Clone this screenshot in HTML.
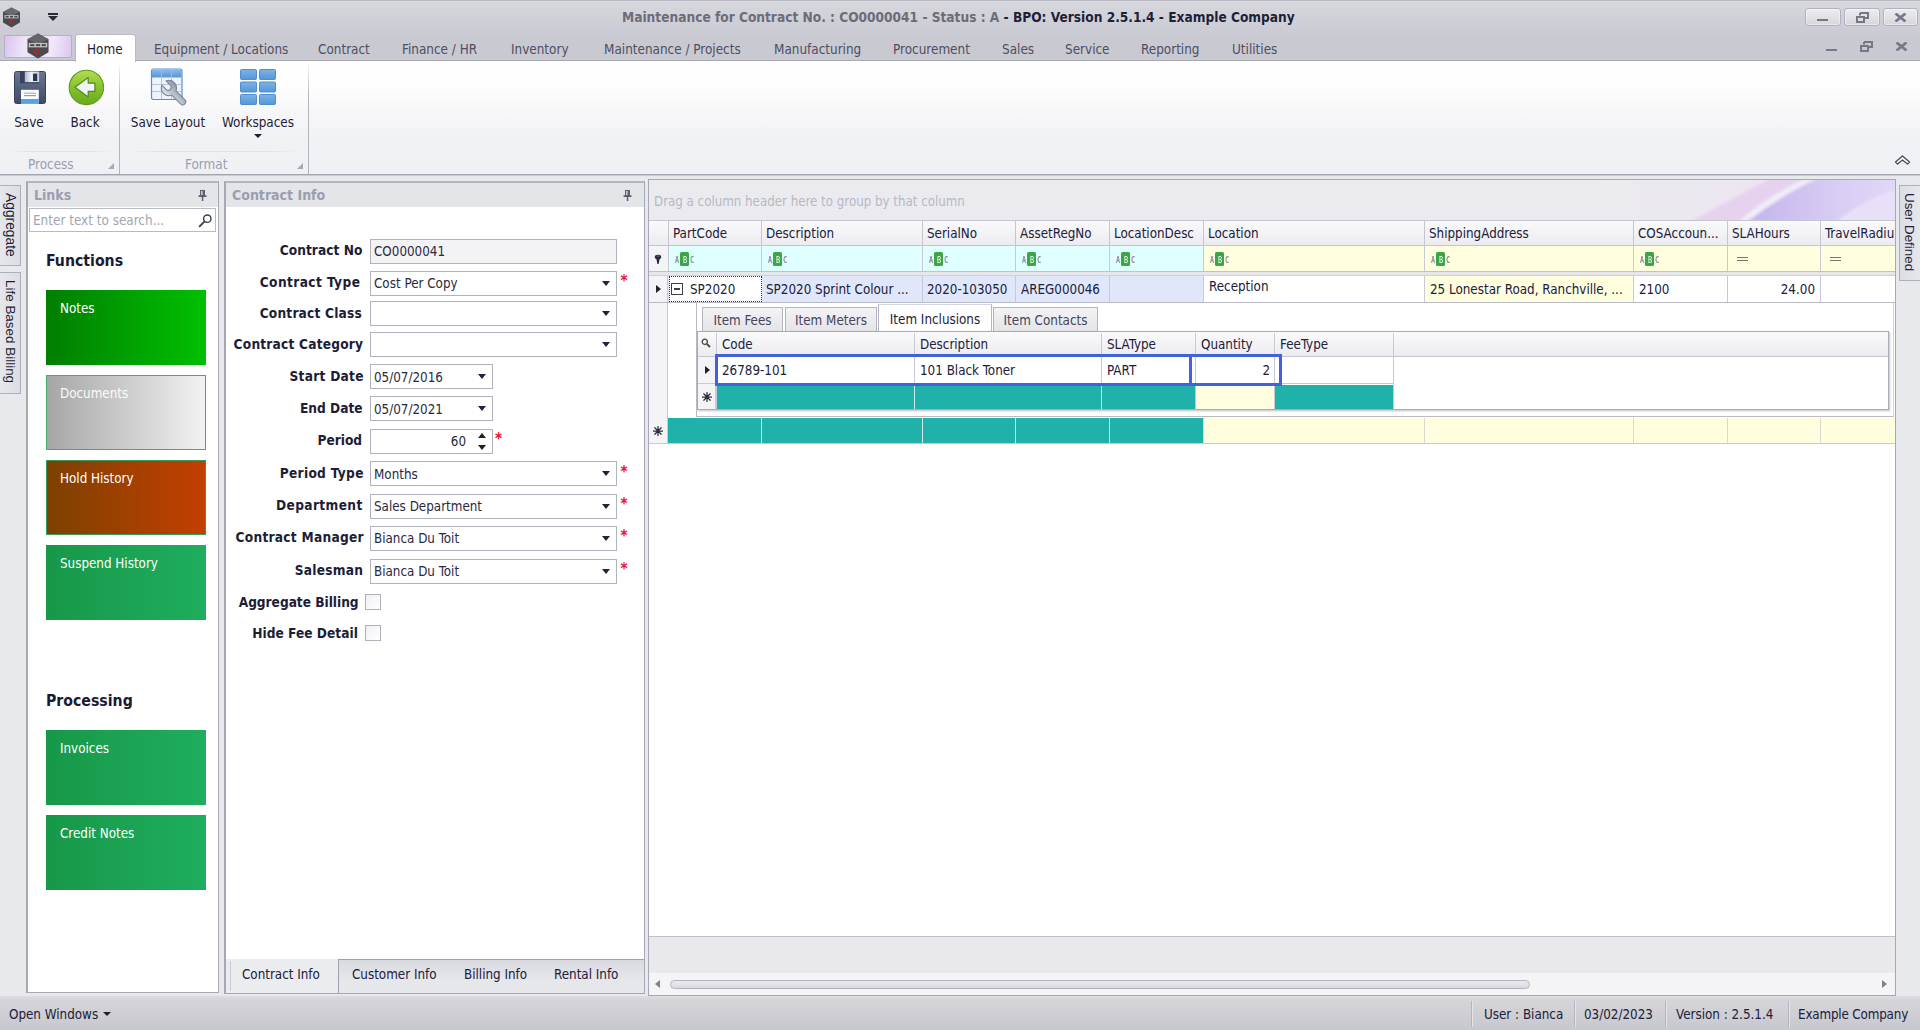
<!DOCTYPE html>
<html><head><meta charset="utf-8"><title>Maintenance for Contract</title>
<style>
*{box-sizing:border-box;margin:0;padding:0}
html,body{width:1920px;height:1030px;overflow:hidden;background:#e8e9ed}
body{font-family:"DejaVu Sans Condensed","Liberation Sans",sans-serif;font-size:13.3px;color:#20203a;position:relative;line-height:16px}
.a{position:absolute;white-space:nowrap}
.b{font-weight:bold;font-size:13.6px}
/* title */
#title{left:0;top:0;width:1920px;height:35px;background:linear-gradient(#d7d8dd,#c9cad3);border-top:1px solid #b9bac3}
#tabs{left:0;top:35px;width:1920px;height:26px;background:#c9c9d1;border-bottom:1px solid #a9a9b3}
#ribbon{left:0;top:61px;width:1920px;height:114px;background:linear-gradient(#ffffff 0%,#fefefe 20%,#f7f7f9 45%,#f1f2f5 70%,#eff0f4 100%);border-bottom:1px solid #a2a4b0;box-shadow:0 1px 0 #c9cad3}
.tab{top:42px;color:#4e4e64;font-size:13.4px}
.wb{top:8px;width:35px;height:18px;border:1px solid #b1b2bd;border-radius:3px;background:linear-gradient(#ececf0,#d6d6dc);box-shadow:inset 0 0 0 1px rgba(255,255,255,.45)}
.rl{top:115px;text-align:center;font-size:13.4px;color:#1d1d35}
.gc{top:157px;color:#9a9eb0;font-size:13.4px}
.vsep{width:1px;background:linear-gradient(rgba(170,170,182,0),#b4b4be 30%,#b4b4be)}
/* panels */
.panel{background:#fff;border:1px solid #a6a8b4}
.phead{left:0;top:0;height:24px;background:#e4e5e9;color:#9b9eb0;font-weight:bold;font-size:14px;padding:4px 0 0 6px}
.tile{left:46px;width:160px;height:75px;color:#fff;font-size:13.3px;padding:11px 0 0 14px}
.lbl{font-weight:bold;font-size:13.6px;color:#1d1d35;text-align:right;left:0;width:139px}
.inp{left:145px;height:25px;border:1px solid #b0b2bd;background:#fff;padding:4px 0 0 3px;font-size:13.3px;color:#2a2a40}
.dd:after{content:"";position:absolute;right:6px;top:9px;border:4.5px solid transparent;border-top:5px solid #222238;border-bottom:0}
.vt{writing-mode:vertical-rl;font-family:"Liberation Sans",sans-serif;font-size:13.8px;color:#1d1d35;line-height:16px}
.chk{width:16px;height:16px;border:1px solid #aeb0bb;background:linear-gradient(135deg,#f0f0f4,#fff)}
.abc{width:20px;height:14px}.abc:before{content:"";position:absolute;left:5px;top:0;width:9px;height:14px;background:#3aa648;border-radius:1.5px}.abc i,.abc b{position:absolute;left:0;top:3px;font:bold 9.5px/10px "DejaVu Sans Mono","Liberation Mono",monospace;color:#8a8c9c;transform:scaleX(.72);transform-origin:0 0}.abc b{left:7.6px;color:#fff;font-weight:normal}
.star{font-size:10px;color:#333;line-height:12px;font-family:"DejaVu Sans",sans-serif}
.req{color:#f0102c;font-weight:bold;font-size:15px}
</style></head><body>
<div class="a" id="title"></div>
<div class="a" id="tabs"></div>
<div class="a" id="ribbon"></div>
<!-- title bar -->
<svg class="a" style="left:2px;top:7px" width="19" height="21" viewBox="0 0 19 21"><polygon points="9.5,0.5 18,5 18,15.5 9.5,20.5 1,15.5 1,5" fill="#4a4a4e"/><polygon points="9.5,0.5 18,5 9.5,9 1,5" fill="#6a6a6e"/><rect x="2.5" y="8" width="14" height="3.4" fill="#b9b9bb"/><rect x="3.6" y="8.9" width="3" height="1.6" fill="#4a4a4e"/><rect x="8" y="8.9" width="3" height="1.6" fill="#4a4a4e"/><rect x="12.4" y="8.9" width="3" height="1.6" fill="#4a4a4e"/><circle cx="9" cy="15" r="1.6" fill="none" stroke="#c8202a" stroke-width="0.9"/></svg>
<div class="a" style="left:48px;top:13px;width:10px;height:2px;background:#2a2a3a"></div>
<div class="a" style="left:48px;top:16px;border:5px solid transparent;border-top:5px solid #2a2a3a;border-bottom:0"></div>
<div class="a b" style="left:622px;top:9px;font-size:13.6px;color:#6c6c78">Maintenance for Contract No. : CO0000041 - Status : A <span style="color:#1f1f36">- BPO: Version 2.5.1.4 - Example Company</span></div>
<div class="a wb" style="left:1805px;width:36px"><div class="a" style="left:11px;top:10px;width:11px;height:2px;background:#767888"></div></div>
<div class="a wb" style="left:1844px;width:36px"><svg class="a" style="left:11px;top:3px" width="13" height="11" viewBox="0 0 13 11"><path d="M4 1h8v5h-3M4 1v2.5" fill="none" stroke="#767888" stroke-width="2"/><rect x="1" y="5" width="7" height="5" fill="none" stroke="#767888" stroke-width="2"/></svg></div>
<div class="a wb" style="left:1883px"><svg class="a" style="left:10px;top:4px" width="13" height="9" viewBox="0 0 13 9"><path d="M1.5 0.5L11.5 8.5M11.5 0.5L1.5 8.5" stroke="#767888" stroke-width="2.7"/></svg></div>
<!-- tab row -->
<div class="a" style="left:4px;top:35px;width:68px;height:23px;border:1px solid #b4b0c6;border-radius:2px;background:linear-gradient(100deg,#d9c4ee 0%,#efe4f8 30%,#e8daf4 50%,#f1e8f9 70%,#dcc6ef 100%)"></div>
<svg class="a" style="left:26px;top:33px" width="24" height="26" viewBox="0 0 19 21"><polygon points="9.5,0.5 18,5 18,15.5 9.5,20.5 1,15.5 1,5" fill="#4a4a4e"/><polygon points="9.5,0.5 18,5 9.5,9 1,5" fill="#66666a"/><rect x="2" y="8" width="15" height="3.6" fill="#c4c4c6"/><rect x="3.2" y="9" width="3.4" height="1.6" fill="#4a4a4e"/><rect x="7.8" y="9" width="3.4" height="1.6" fill="#4a4a4e"/><rect x="12.4" y="9" width="3.4" height="1.6" fill="#4a4a4e"/><circle cx="8.5" cy="15" r="1.7" fill="none" stroke="#c8202a" stroke-width="0.9"/></svg>
<div class="a" style="left:75px;top:34px;width:61px;height:28px;background:#fff;border:1px solid #b9b9c3;border-bottom:0;border-radius:3px 3px 0 0"></div>
<div class="a tab" style="left:87px;color:#1d1d35">Home</div>
<div class="a tab" style="left:154px">Equipment / Locations</div>
<div class="a tab" style="left:318px">Contract</div>
<div class="a tab" style="left:402px">Finance / HR</div>
<div class="a tab" style="left:511px">Inventory</div>
<div class="a tab" style="left:604px">Maintenance / Projects</div>
<div class="a tab" style="left:774px">Manufacturing</div>
<div class="a tab" style="left:893px">Procurement</div>
<div class="a tab" style="left:1002px">Sales</div>
<div class="a tab" style="left:1065px">Service</div>
<div class="a tab" style="left:1141px">Reporting</div>
<div class="a tab" style="left:1232px">Utilities</div>
<div class="a" style="left:1826px;top:49px;width:11px;height:2px;background:#767888"></div>
<svg class="a" style="left:1860px;top:41px" width="13" height="11" viewBox="0 0 13 11"><path d="M4 1h8v5h-3M4 1v2.5" fill="none" stroke="#767888" stroke-width="2"/><rect x="1" y="5" width="7" height="5" fill="none" stroke="#767888" stroke-width="2"/></svg>
<svg class="a" style="left:1895px;top:42px" width="13" height="9" viewBox="0 0 13 9"><path d="M1.5 0.5L11.5 8.5M11.5 0.5L1.5 8.5" stroke="#767888" stroke-width="2.7"/></svg>

<!-- ribbon -->
<svg class="a" style="left:13px;top:70px" width="34" height="35" viewBox="0 0 34 35">
<defs><linearGradient id="sv1" x1="0" y1="0" x2="0" y2="1"><stop offset="0" stop-color="#6c7892"/><stop offset="1" stop-color="#3e4966"/></linearGradient>
<linearGradient id="sv2" x1="0" y1="0" x2="1" y2="0"><stop offset="0" stop-color="#aeb8cc"/><stop offset="0.45" stop-color="#eef2f8"/><stop offset="1" stop-color="#c6cedc"/></linearGradient></defs>
<rect x="1.5" y="1.5" width="31" height="32" rx="2" fill="url(#sv1)" stroke="#38425e" stroke-width="1"/>
<rect x="7" y="1.5" width="19.2" height="11.8" fill="#39435f"/>
<rect x="11.8" y="1.5" width="14.4" height="10.6" fill="url(#sv2)"/><rect x="20" y="3.6" width="4.2" height="7.4" fill="#2a3450"/>
<rect x="8" y="19.8" width="17.8" height="13.7" fill="#fbfcfe"/><rect x="11" y="22.6" width="12" height="1.2" fill="#a4aecb"/><rect x="11" y="25" width="12" height="1.2" fill="#8f9bc0"/><rect x="8" y="29" width="17.8" height="4" fill="#5aa2e0"/>
</svg>
<svg class="a" style="left:68px;top:69px" width="37" height="37" viewBox="0 0 37 37">
<defs><linearGradient id="bk1" x1="0" y1="0" x2="0" y2="1"><stop offset="0" stop-color="#b4dc54"/><stop offset="0.5" stop-color="#86c22c"/><stop offset="1" stop-color="#6aa81c"/></linearGradient></defs>
<circle cx="18.4" cy="18.4" r="17.2" fill="url(#bk1)" stroke="#5f9a1a" stroke-width="1.1"/>
<path d="M7 18.3L20.2 8.6V14.2H26.9V22.4H20.2V28z" fill="#eef4fa" stroke="#4f8c14" stroke-width="1.2" stroke-linejoin="round"/>
</svg>
<svg class="a" style="left:150px;top:68px" width="40" height="40" viewBox="0 0 40 40">
<defs><linearGradient id="sl1" x1="0" y1="0" x2="0" y2="1"><stop offset="0" stop-color="#8bbbe8"/><stop offset="1" stop-color="#5a96d6"/></linearGradient>
<linearGradient id="sl2" x1="0" y1="0" x2="1" y2="0"><stop offset="0" stop-color="#dfe4ec"/><stop offset="0.5" stop-color="#b4bdca"/><stop offset="1" stop-color="#8c97aa"/></linearGradient></defs>
<rect x="1.5" y="1" width="30.5" height="30.5" rx="2" fill="#eef2fa" stroke="#5f8dd0" stroke-width="1.2"/>
<path d="M2 3a1.5 1.5 0 0 1 1.5-1.500000000000000h26.5a1.5 1.5 0 0 1 1.5 1.5v6h-29.5z" fill="url(#sl1)"/>
<path d="M11.5 2v29M21.5 2v29" stroke="#a9bde0" stroke-width="1" fill="none" opacity=".8"/><path d="M2 9.5h29.5M2 16.5h29.5M2 23.5h29.5" stroke="#b4c4e4" stroke-width="1" fill="none"/>
<g transform="translate(18.9,20) rotate(-45)"><path d="M-2.9 -7.02L-2.9 -1A2.9 2.9 0 0 0 2.9 -1L2.9 -7.02A7.6 7.6 0 0 1 3.0 6.98L3.0 19.5A3.0 3.0 0 0 1 -3.0 19.5L-3.0 6.98A7.6 7.6 0 0 1 -2.9 -7.02Z" fill="url(#sl2)" stroke="#76829a" stroke-width="1"/></g>
</svg>
<svg class="a" style="left:239px;top:68px" width="38" height="38" viewBox="0 0 38 38">
<defs><linearGradient id="ws1" x1="0" y1="0" x2="0" y2="1"><stop offset="0" stop-color="#7db3e6"/><stop offset="1" stop-color="#5596d6"/></linearGradient></defs>
<g fill="url(#ws1)" stroke="#4f8ed0" stroke-width="1"><rect x="1.5" y="1.5" width="16" height="10" rx="1"/><rect x="20.5" y="1.5" width="16" height="10" rx="1"/><rect x="1.5" y="14" width="16" height="10" rx="1"/><rect x="20.5" y="14" width="16" height="10" rx="1"/><rect x="1.5" y="26.5" width="16" height="10" rx="1"/><rect x="20.5" y="26.5" width="16" height="10" rx="1"/></g>
</svg>
<div class="a rl" style="left:0;width:58px">Save</div>
<div class="a rl" style="left:56px;width:58px">Back</div>
<div class="a rl" style="left:118px;width:100px">Save Layout</div>
<div class="a rl" style="left:208px;width:100px">Workspaces</div>
<div class="a" style="left:254px;top:134px;border:4px solid transparent;border-top:4px solid #1d1d30;border-bottom:0"></div>
<div class="a vsep" style="left:119px;top:62px;height:112px"></div>
<div class="a vsep" style="left:308px;top:62px;height:112px"></div>
<div class="a" style="left:8px;top:151px;width:104px;height:1px;background:linear-gradient(90deg,rgba(220,220,228,0),#e0e0e6 20%,#e0e0e6 80%,rgba(220,220,228,0))"></div>
<div class="a" style="left:130px;top:151px;width:170px;height:1px;background:linear-gradient(90deg,rgba(220,220,228,0),#e0e0e6 20%,#e0e0e6 80%,rgba(220,220,228,0))"></div>
<div class="a gc" style="left:28px">Process</div>
<div class="a gc" style="left:185px">Format</div>
<div class="a" style="left:108px;top:163px;border:3px solid transparent;border-right-color:#a8a8b2;border-bottom-color:#a8a8b2"></div>
<div class="a" style="left:297px;top:163px;border:3px solid transparent;border-right-color:#a8a8b2;border-bottom-color:#a8a8b2"></div>
<svg class="a" style="left:1894px;top:154px" width="17" height="13" viewBox="0 0 17 13"><path d="M1.5 8L8.5 2L15.5 8L13.5 10L8.5 6L3.5 10z" fill="#fff" stroke="#4a4a56" stroke-width="1.3" stroke-linejoin="round"/></svg>

<!-- status bar -->
<div class="a" style="left:0;top:996px;width:1920px;height:34px;background:linear-gradient(#dcdce1,#d5d5da 10%,#c7c7ce)"></div>
<div class="a" style="left:9px;top:1007px">Open Windows</div><div class="a" style="left:103px;top:1012px;border:4px solid transparent;border-top:4px solid #222;border-bottom:0"></div>
<div class="a" style="left:1471px;top:1001px;width:2px;height:26px;border-left:1px solid #b4b4be;border-right:1px solid #e4e4e9"></div>
<div class="a" style="left:1574px;top:1001px;width:2px;height:26px;border-left:1px solid #b4b4be;border-right:1px solid #e4e4e9"></div>
<div class="a" style="left:1665px;top:1001px;width:2px;height:26px;border-left:1px solid #b4b4be;border-right:1px solid #e4e4e9"></div>
<div class="a" style="left:1788px;top:1001px;width:2px;height:26px;border-left:1px solid #b4b4be;border-right:1px solid #e4e4e9"></div>
<div class="a" style="left:1484px;top:1007px;letter-spacing:0px">User : Bianca</div>
<div class="a" style="left:1584px;top:1007px;letter-spacing:0px">03/02/2023</div>
<div class="a" style="left:1676px;top:1007px;letter-spacing:0px">Version : 2.5.1.4</div>
<div class="a" style="left:1798px;top:1007px;letter-spacing:-0.17px">Example Company</div>

<!-- left side tabs -->
<div class="a" style="left:0;top:185px;width:21px;height:81px;border:1px solid #adafba;border-left:0;background:linear-gradient(90deg,#e6e7eb,#dddee4)"></div>
<div class="a" style="left:0;top:272px;width:21px;height:122px;border:1px solid #adafba;border-left:0;background:linear-gradient(90deg,#e6e7eb,#dddee4)"></div>
<div class="a vt" style="left:2px;top:193px">Aggregate</div>
<div class="a vt" style="left:2px;top:280px;font-size:13.45px">Life Based Billing</div>
<!-- links panel -->
<div class="a panel" style="left:26px;top:181px;width:193px;height:812px;border-width:2px 1px 1px 2px;border-top-color:#b3b5c0">
 <div class="a phead" style="width:190px">Links</div>
 <svg class="a" style="left:170px;top:7px" width="9" height="11" viewBox="0 0 9 11"><path d="M2 0h5v5.2h-5z M0.500000000000000 5.2h8v1.8h-8z M3.8 7h1.500000000000000v4h-1.5z" fill="#5e6070"/><rect x="3" y="1" width="1.6" height="4" fill="#c9cad3"/></svg>
 <div class="a" style="left:1px;top:25px;width:187px;height:24px;border:1px solid #b8bac4;background:#fff;color:#a2a4b2;padding:4px 0 0 3px;font-size:13.4px">Enter text to search...</div>
 <svg class="a" style="left:170px;top:30px" width="15" height="15" viewBox="0 0 15 15"><circle cx="9.3" cy="5.7" r="3.7" fill="none" stroke="#3c3c48" stroke-width="1.4"/><path d="M6.6 8.4L1.6 13.4" stroke="#3c3c48" stroke-width="1.8" stroke-linecap="round"/></svg>
</div>
<div class="a" style="left:46px;top:251px;font-weight:bold;font-size:15.7px;color:#1a1a30;line-height:20px">Functions</div>
<div class="a tile" style="top:290px;background:linear-gradient(90deg,#007e00,#00c000)">Notes</div>
<div class="a tile" style="top:375px;background:linear-gradient(90deg,#a6a6a6,#f2f2f2);border:1px solid #3eae6c;padding:10px 0 0 13px;color:#fafafa">Documents</div>
<div class="a tile" style="top:460px;background:linear-gradient(90deg,#7c4100,#c43f00);border:1px solid #3a9a5c;padding:10px 0 0 13px">Hold History</div>
<div class="a tile" style="top:545px;background:linear-gradient(90deg,#179848,#1eae5e)">Suspend History</div>
<div class="a" style="left:46px;top:691px;font-weight:bold;font-size:15.7px;color:#1a1a30;line-height:20px">Processing</div>
<div class="a tile" style="top:730px;background:linear-gradient(90deg,#179848,#1eae5e)">Invoices</div>
<div class="a tile" style="top:815px;background:linear-gradient(90deg,#179848,#1eae5e)">Credit Notes</div>

<!-- contract info panel -->
<div class="a panel" style="left:224px;top:181px;width:421px;height:813px;border-width:2px 1px 1px 2px;border-top-color:#b3b5c0">
 <div class="a phead" style="width:418px">Contract Info</div>
 <svg class="a" style="left:397px;top:7px" width="9" height="11" viewBox="0 0 9 11"><path d="M2 0h5v5.2h-5z M0.500000000000000 5.2h8v1.8h-8z M3.8 7h1.500000000000000v4h-1.5z" fill="#5e6070"/><rect x="3" y="1" width="1.6" height="4" fill="#c9cad3"/></svg>
 <div class="a" style="left:0;top:776px;width:418px;height:34px;background:#ebecf0"></div>
 <div class="a" style="left:112px;top:776px;width:306px;height:34px;background:linear-gradient(#d9dae0,#e6e7eb 60%);border-top:1px solid #a0a2af;border-left:1px solid #a0a2af"></div><div class="a" style="left:4px;top:778px;width:1px;height:30px;background:#c9cad3"></div>
 <div class="a" style="left:16px;top:784px">Contract Info</div><div class="a" style="left:126px;top:784px">Customer Info</div><div class="a" style="left:238px;top:784px">Billing Info</div><div class="a" style="left:328px;top:784px">Rental Info</div>
</div>
<div class="a lbl" style="left:279.7px;top:242px;width:auto;text-align:left;letter-spacing:0.06px">Contract No</div>
<div class="a inp" style="left:370px;top:239px;width:247px;background:#f3f3f6">CO0000041</div>
<div class="a lbl" style="left:259.7px;top:274px;width:auto;text-align:left;letter-spacing:0.41px">Contract Type</div>
<div class="a inp dd" style="left:370px;top:271px;width:247px">Cost Per Copy</div>
<div class="a req" style="left:620.5px;top:273px">*</div>
<div class="a lbl" style="left:259.7px;top:305px;width:auto;text-align:left;letter-spacing:0.19px">Contract Class</div>
<div class="a inp dd" style="left:370px;top:301px;padding-top:5px;width:247px"></div>
<div class="a lbl" style="left:233.6px;top:336px;width:auto;text-align:left;letter-spacing:0.21px">Contract Category</div>
<div class="a inp dd" style="left:370px;top:332px;padding-top:5px;width:247px"></div>
<div class="a lbl" style="left:289.5px;top:368px;width:auto;text-align:left;letter-spacing:0.27px">Start Date</div>
<div class="a inp dd" style="left:370px;top:364px;padding-top:5px;width:123px">05/07/2016</div>
<div class="a lbl" style="left:300.0px;top:400px;width:auto;text-align:left;letter-spacing:-0.01px">End Date</div>
<div class="a inp dd" style="left:370px;top:396px;padding-top:5px;width:123px">05/07/2021</div>
<div class="a lbl" style="left:317.5px;top:432px;width:auto;text-align:left;letter-spacing:-0.01px">Period</div>
<div class="a inp" style="left:370px;top:429px;width:123px;text-align:right;padding-right:26px">60</div>
<div class="a" style="left:478px;top:433px;border:4px solid transparent;border-bottom:5px solid #222;border-top:0"></div>
<div class="a" style="left:478px;top:445px;border:4px solid transparent;border-top:5px solid #222;border-bottom:0"></div>
<div class="a req" style="left:495px;top:431px">*</div>
<div class="a lbl" style="left:279.7px;top:465px;width:auto;text-align:left;letter-spacing:0.31px">Period Type</div>
<div class="a inp dd" style="left:370px;top:461px;padding-top:5px;width:247px">Months</div>
<div class="a req" style="left:620.5px;top:464px">*</div>
<div class="a lbl" style="left:276.0px;top:497px;width:auto;text-align:left;letter-spacing:0.37px">Department</div>
<div class="a inp dd" style="left:370px;top:494px;width:247px">Sales Department</div>
<div class="a req" style="left:620.5px;top:496px">*</div>
<div class="a lbl" style="left:235.5px;top:529px;width:auto;text-align:left;letter-spacing:0.27px">Contract Manager</div>
<div class="a inp dd" style="left:370px;top:526px;width:247px">Bianca Du Toit</div>
<div class="a req" style="left:620.5px;top:528px">*</div>
<div class="a lbl" style="left:294.7px;top:562px;width:auto;text-align:left;letter-spacing:0.26px">Salesman</div>
<div class="a inp dd" style="left:370px;top:559px;width:247px">Bianca Du Toit</div>
<div class="a req" style="left:620.5px;top:561px">*</div>
<div class="a lbl" style="left:238.7px;top:594px;width:auto;text-align:left;letter-spacing:-0.02px">Aggregate Billing</div>
<div class="a chk" style="left:365px;top:594px"></div>
<div class="a lbl" style="left:252.2px;top:625px;width:auto;text-align:left;letter-spacing:0.03px">Hide Fee Detail</div>
<div class="a chk" style="left:365px;top:625px"></div>

<!-- main grid -->
<div class="a" style="left:648px;top:179px;width:1248px;height:817px;background:#fff;border:1px solid #a6a8b4"></div>
<div class="a" style="left:649px;top:180px;width:1246px;height:40px;background:#ebebef"></div>
<svg class="a" style="left:1600px;top:180px" width="295" height="40" viewBox="0 0 295 40"><defs><linearGradient id="sw0" x1="0" y1="0" x2="1" y2="0"><stop offset="0" stop-color="#ebebef"/><stop offset="0.5" stop-color="#ece6f1"/><stop offset="1" stop-color="#ece2f4"/></linearGradient><linearGradient id="sw2" x1="0" y1="0" x2="1" y2="0"><stop offset="0" stop-color="#c3b3ee"/><stop offset="0.6" stop-color="#d9cdf4"/><stop offset="1" stop-color="#e2d8f6"/></linearGradient><filter id="swb" x="-5%" y="-20%" width="110%" height="140%"><feGaussianBlur stdDeviation="1.6"/></filter></defs><rect width="295" height="40" fill="url(#sw0)"/><g filter="url(#swb)"><path d="M90 42Q140 14 172 -2L206 -2Q165 18 138 42z" fill="#e6d2ef"/><path d="M138 42Q165 18 206 -2L218 -2Q178 18 147 42z" fill="#f1edf6"/><path d="M147 42Q180 16 218 -2L300 -2L300 42z" fill="url(#sw2)"/><path d="M236 42Q262 20 300 8L300 42z" fill="#e8e0f8"/></g></svg>
<div class="a" style="left:654px;top:194px;color:#b6b8c4;font-size:13.2px">Drag a column header here to group by that column</div>
<div class="a" style="left:649px;top:220px;width:1246px;height:26px;background:linear-gradient(#fafafb,#ececf0);border-top:1px solid #c4c5ce;border-bottom:1px solid #c4c5ce"></div>
<div class="a" style="left:668px;top:221px;width:1px;height:24px;background:#c4c5ce"></div>
<div class="a" style="left:673px;top:225.5px;max-width:88px;overflow:hidden">PartCode</div>
<div class="a" style="left:761px;top:221px;width:1px;height:24px;background:#c4c5ce"></div>
<div class="a" style="left:766px;top:225.5px;max-width:156px;overflow:hidden">Description</div>
<div class="a" style="left:922px;top:221px;width:1px;height:24px;background:#c4c5ce"></div>
<div class="a" style="left:927px;top:225.5px;max-width:88px;overflow:hidden">SerialNo</div>
<div class="a" style="left:1015px;top:221px;width:1px;height:24px;background:#c4c5ce"></div>
<div class="a" style="left:1020px;top:225.5px;max-width:89px;overflow:hidden">AssetRegNo</div>
<div class="a" style="left:1109px;top:221px;width:1px;height:24px;background:#c4c5ce"></div>
<div class="a" style="left:1114px;top:225.5px;max-width:89px;overflow:hidden">LocationDesc</div>
<div class="a" style="left:1203px;top:221px;width:1px;height:24px;background:#c4c5ce"></div>
<div class="a" style="left:1208px;top:225.5px;max-width:216px;overflow:hidden">Location</div>
<div class="a" style="left:1424px;top:221px;width:1px;height:24px;background:#c4c5ce"></div>
<div class="a" style="left:1429px;top:225.5px;max-width:204px;overflow:hidden">ShippingAddress</div>
<div class="a" style="left:1633px;top:221px;width:1px;height:24px;background:#c4c5ce"></div>
<div class="a" style="left:1638px;top:225.5px;max-width:89px;overflow:hidden">COSAccoun...</div>
<div class="a" style="left:1727px;top:221px;width:1px;height:24px;background:#c4c5ce"></div>
<div class="a" style="left:1732px;top:225.5px;max-width:88px;overflow:hidden">SLAHours</div>
<div class="a" style="left:1820px;top:221px;width:1px;height:24px;background:#c4c5ce"></div>
<div class="a" style="left:1825px;top:225.5px;max-width:70px;overflow:hidden">TravelRadiu</div>
<div class="a" style="left:649px;top:246px;width:19px;height:25px;background:#f4f4f7"></div>
<svg class="a" style="left:654px;top:254px" width="8" height="11" viewBox="0 0 8 11"><ellipse cx="4" cy="3" rx="3.2" ry="2.2" fill="#26263a"/><path d="M2.3 4.5h3.4l-1.1 5.5h-1.2z" fill="#26263a"/><rect x="2.6" y="1.7" width="2.8" height="0.8" fill="#8a8a98"/></svg>
<div class="a" style="left:668px;top:246px;width:535px;height:25px;background:#e0ffff"></div>
<div class="a" style="left:1203px;top:246px;width:692px;height:25px;background:#ffffe0"></div>
<div class="a" style="left:668px;top:246px;width:1px;height:25px;background:#c8c9d2"></div>
<div class="a abc" style="left:675px;top:252px"><i>A</i><b>B</b><i style="left:15px">C</i></div>
<div class="a" style="left:761px;top:246px;width:1px;height:25px;background:#c8c9d2"></div>
<div class="a abc" style="left:768px;top:252px"><i>A</i><b>B</b><i style="left:15px">C</i></div>
<div class="a" style="left:922px;top:246px;width:1px;height:25px;background:#c8c9d2"></div>
<div class="a abc" style="left:929px;top:252px"><i>A</i><b>B</b><i style="left:15px">C</i></div>
<div class="a" style="left:1015px;top:246px;width:1px;height:25px;background:#c8c9d2"></div>
<div class="a abc" style="left:1022px;top:252px"><i>A</i><b>B</b><i style="left:15px">C</i></div>
<div class="a" style="left:1109px;top:246px;width:1px;height:25px;background:#c8c9d2"></div>
<div class="a abc" style="left:1116px;top:252px"><i>A</i><b>B</b><i style="left:15px">C</i></div>
<div class="a" style="left:1203px;top:246px;width:1px;height:25px;background:#c8c9d2"></div>
<div class="a abc" style="left:1210px;top:252px"><i>A</i><b>B</b><i style="left:15px">C</i></div>
<div class="a" style="left:1424px;top:246px;width:1px;height:25px;background:#c8c9d2"></div>
<div class="a abc" style="left:1431px;top:252px"><i>A</i><b>B</b><i style="left:15px">C</i></div>
<div class="a" style="left:1633px;top:246px;width:1px;height:25px;background:#c8c9d2"></div>
<div class="a abc" style="left:1640px;top:252px"><i>A</i><b>B</b><i style="left:15px">C</i></div>
<div class="a" style="left:1727px;top:246px;width:1px;height:25px;background:#c8c9d2"></div>
<div class="a" style="left:1737px;top:257px;width:11px;height:4px;border-top:1px solid #777;border-bottom:1px solid #777"></div>
<div class="a" style="left:1820px;top:246px;width:1px;height:25px;background:#c8c9d2"></div>
<div class="a" style="left:1830px;top:257px;width:11px;height:4px;border-top:1px solid #777;border-bottom:1px solid #777"></div>
<div class="a" style="left:649px;top:271px;width:1246px;height:5px;background:#e6e6eb;border-top:1px solid #c0c1cb;border-bottom:1px solid #d0d1d9"></div>
<div class="a" style="left:649px;top:276px;width:19px;height:141px;background:#f4f4f7;border-right:1px solid #c8c9d2"></div>
<div class="a" style="left:656px;top:285px;border:4px solid transparent;border-left:5px solid #222;border-right:0"></div>
<div class="a" style="left:668px;top:276px;width:535px;height:26px;background:#e1e7fb"></div>
<div class="a" style="left:1424px;top:276px;width:209px;height:26px;background:#ffffe0"></div>
<div class="a" style="left:649px;top:302px;width:1246px;height:1px;background:#b9bac4"></div>
<div class="a" style="left:761px;top:276px;width:1px;height:26px;background:#c8c9d2"></div>
<div class="a" style="left:922px;top:276px;width:1px;height:26px;background:#c8c9d2"></div>
<div class="a" style="left:1015px;top:276px;width:1px;height:26px;background:#c8c9d2"></div>
<div class="a" style="left:1109px;top:276px;width:1px;height:26px;background:#c8c9d2"></div>
<div class="a" style="left:1203px;top:276px;width:1px;height:26px;background:#c8c9d2"></div>
<div class="a" style="left:1424px;top:276px;width:1px;height:26px;background:#c8c9d2"></div>
<div class="a" style="left:1633px;top:276px;width:1px;height:26px;background:#c8c9d2"></div>
<div class="a" style="left:1727px;top:276px;width:1px;height:26px;background:#c8c9d2"></div>
<div class="a" style="left:1820px;top:276px;width:1px;height:26px;background:#c8c9d2"></div>
<div class="a" style="left:669px;top:276px;width:93px;height:26px;background:#fff;border:1px dotted #333"></div>
<div class="a" style="left:671px;top:283px;width:12px;height:12px;border:1.5px solid #3e3e4c;background:#fff"></div><div class="a" style="left:674px;top:288px;width:6px;height:2px;background:#3e3e4c"></div>
<div class="a" style="left:690px;top:282px">SP2020</div>
<div class="a" style="left:766px;top:282px">SP2020 Sprint Colour ...</div>
<div class="a" style="left:927px;top:282px">2020-103050</div>
<div class="a" style="left:1021px;top:282px">AREG000046</div>
<div class="a" style="left:1209px;top:279px">Reception</div>
<div class="a" style="left:1430px;top:282px">25 Lonestar Road, Ranchville, ...</div>
<div class="a" style="left:1639px;top:282px">2100</div>
<div class="a" style="left:1727px;top:282px;width:88px;text-align:right">24.00</div>
<div class="a" style="left:696px;top:303px;width:1198px;height:114px;border-left:1px solid #b9bac4;border-bottom:1px solid #b9bac4;border-right:1px solid #d4d5dc"></div>
<div class="a" style="left:702px;top:307px;width:81px;height:25px;background:linear-gradient(#f4f4f7,#e3e3e8);border:1px solid #b4b5c0;border-bottom:0;text-align:center;padding-top:5px;color:#45455a">Item Fees</div>
<div class="a" style="left:785px;top:307px;width:92px;height:25px;background:linear-gradient(#f4f4f7,#e3e3e8);border:1px solid #b4b5c0;border-bottom:0;text-align:center;padding-top:5px;color:#45455a">Item Meters</div>
<div class="a" style="left:878px;top:304px;width:114px;height:29px;background:#fff;border:1px solid #b4b5c0;border-top-color:#d4d5dc;border-bottom:0;text-align:center;padding-top:7px;color:#1d1d35">Item Inclusions</div>
<div class="a" style="left:993px;top:307px;width:105px;height:25px;background:linear-gradient(#f4f4f7,#e3e3e8);border:1px solid #b4b5c0;border-bottom:0;text-align:center;padding-top:5px;color:#45455a">Item Contacts</div>
<div class="a" style="left:697px;top:331px;width:1192px;height:79px;border:1px solid #a9abb6;box-shadow:1px 1px 2px rgba(0,0,0,.25)"></div>
<div class="a" style="left:698px;top:332px;width:1190px;height:25px;background:linear-gradient(#fafafb,#ececf0);border-bottom:1px solid #c4c5ce"></div>
<div class="a" style="left:698px;top:357px;width:18px;height:52px;background:#f4f4f7;border-right:1px solid #c8c9d2"></div>
<div class="a" style="left:716px;top:333px;width:1px;height:76px;background:#c8c9d2"></div>
<div class="a" style="left:722px;top:337px">Code</div>
<div class="a" style="left:914px;top:333px;width:1px;height:76px;background:#c8c9d2"></div>
<div class="a" style="left:920px;top:337px">Description</div>
<div class="a" style="left:1101px;top:333px;width:1px;height:76px;background:#c8c9d2"></div>
<div class="a" style="left:1107px;top:337px">SLAType</div>
<div class="a" style="left:1195px;top:333px;width:1px;height:76px;background:#c8c9d2"></div>
<div class="a" style="left:1201px;top:337px">Quantity</div>
<div class="a" style="left:1274px;top:333px;width:1px;height:76px;background:#c8c9d2"></div>
<div class="a" style="left:1280px;top:337px">FeeType</div>
<div class="a" style="left:1393px;top:333px;width:1px;height:76px;background:#c8c9d2"></div>
<svg class="a" style="left:701px;top:338px" width="10" height="10" viewBox="0 0 10 10"><circle cx="3.8" cy="3.8" r="2.6" fill="none" stroke="#444" stroke-width="1.3"/><path d="M5.8 5.8L9 9" stroke="#444" stroke-width="1.8"/></svg>
<div class="a" style="left:717px;top:385px;width:478px;height:24px;background:#20b2aa"></div>
<div class="a" style="left:1196px;top:385px;width:78px;height:24px;background:#ffffe0"></div>
<div class="a" style="left:1275px;top:385px;width:118px;height:24px;background:#20b2aa"></div>
<div class="a" style="left:914px;top:384px;width:1px;height:25px;background:#d0ecea"></div><div class="a" style="left:1101px;top:384px;width:1px;height:25px;background:#d0ecea"></div>
<div class="a" style="left:698px;top:383px;width:695px;height:1px;background:#c8c9d2"></div>
<div class="a" style="left:705px;top:366px;border:4px solid transparent;border-left:5px solid #222;border-right:0"></div>
<svg class="a" style="left:702px;top:392px" width="10" height="10" viewBox="0 0 10 10"><path d="M5 0.5v9M0.5 5h9M1.8 1.8l6.4 6.4M8.200000000000001 1.8l-6.4 6.4" stroke="#2e2e3a" stroke-width="1.25" stroke-linecap="round"/></svg>
<div class="a" style="left:722px;top:363px">26789-101</div><div class="a" style="left:920px;top:363px">101 Black Toner</div><div class="a" style="left:1107px;top:363px">PART</div><div class="a" style="left:1196px;top:363px;width:74px;text-align:right">2</div>
<div class="a" style="left:715px;top:354px;width:567px;height:32px;border:3px solid #4062dc"></div>
<div class="a" style="left:1189px;top:354px;width:93px;height:32px;border:3px solid #4062dc"></div>
<div class="a" style="left:649px;top:417px;width:19px;height:26px;background:#f4f4f7;border-right:1px solid #c8c9d2"></div>
<svg class="a" style="left:653px;top:426px" width="10" height="10" viewBox="0 0 10 10"><path d="M5 0.5v9M0.5 5h9M1.8 1.8l6.4 6.4M8.200000000000001 1.8l-6.4 6.4" stroke="#2e2e3a" stroke-width="1.25" stroke-linecap="round"/></svg>
<div class="a" style="left:668px;top:418px;width:535px;height:25px;background:#20b2aa"></div>
<div class="a" style="left:1203px;top:418px;width:692px;height:25px;background:#ffffe0"></div>
<div class="a" style="left:761px;top:418px;width:1px;height:25px;background:#d0ecea"></div>
<div class="a" style="left:922px;top:418px;width:1px;height:25px;background:#d0ecea"></div>
<div class="a" style="left:1015px;top:418px;width:1px;height:25px;background:#d0ecea"></div>
<div class="a" style="left:1109px;top:418px;width:1px;height:25px;background:#d0ecea"></div>
<div class="a" style="left:1203px;top:418px;width:1px;height:25px;background:#d8d8d0"></div>
<div class="a" style="left:1424px;top:418px;width:1px;height:25px;background:#d8d8d0"></div>
<div class="a" style="left:1633px;top:418px;width:1px;height:25px;background:#d8d8d0"></div>
<div class="a" style="left:1727px;top:418px;width:1px;height:25px;background:#d8d8d0"></div>
<div class="a" style="left:1820px;top:418px;width:1px;height:25px;background:#d8d8d0"></div>
<div class="a" style="left:649px;top:443px;width:1246px;height:1px;background:#c8c9d2"></div>
<div class="a" style="left:649px;top:936px;width:1246px;height:37px;background:#e9e9ed;border-top:1px solid #c0c1cb"></div>
<div class="a" style="left:649px;top:973px;width:1246px;height:22px;background:#f4f4f7"></div>
<div class="a" style="left:670px;top:980px;width:860px;height:9px;border:1px solid #b2b3be;border-radius:5px;background:linear-gradient(#ebebef,#d9d9df)"></div>
<div class="a" style="left:655px;top:980px;border:4px solid transparent;border-right:5px solid #7e8090;border-left:0"></div>
<div class="a" style="left:1882px;top:980px;border:4px solid transparent;border-left:5px solid #7e8090;border-right:0"></div>
<div class="a" style="left:1899px;top:185px;width:21px;height:96px;border:1px solid #adafba;border-right:0;background:linear-gradient(90deg,#dddee4,#e6e7eb)"></div>
<div class="a vt" style="left:1901px;top:193px;font-size:13.4px">User Defined</div>

</body></html>
